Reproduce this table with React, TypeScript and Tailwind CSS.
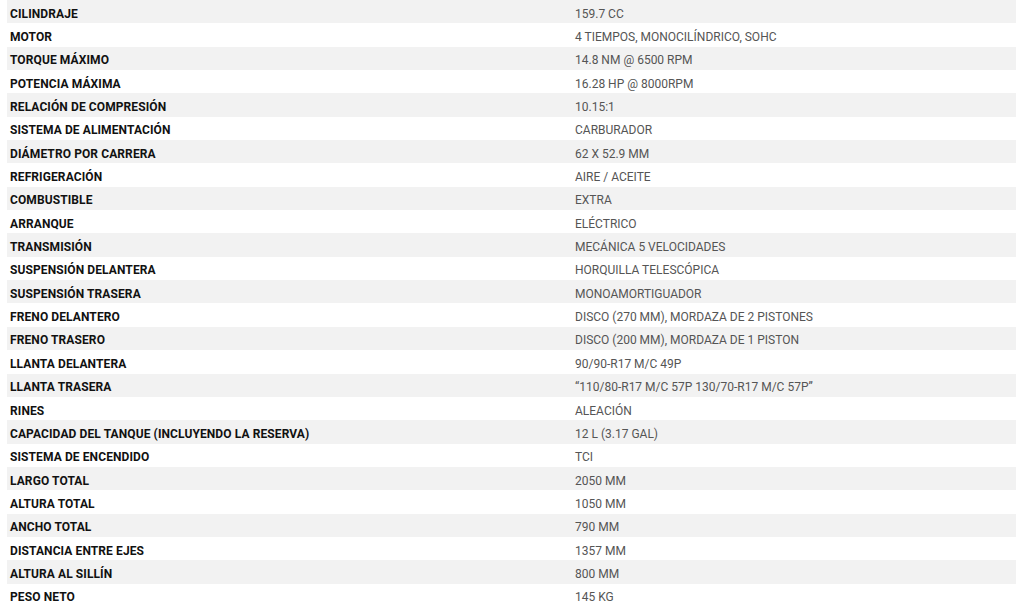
import { FC } from 'react';

const specs: [string, string][] = [
    ['CILINDRAJE', '159.7 CC'],
    ['MOTOR', '4 TIEMPOS, MONOCILÍNDRICO, SOHC'],
    ['TORQUE MÁXIMO', '14.8 NM @ 6500 RPM'],
    ['POTENCIA MÁXIMA', '16.28 HP @ 8000RPM'],
    ['RELACIÓN DE COMPRESIÓN', '10.15:1'],
    ['SISTEMA DE ALIMENTACIÓN', 'CARBURADOR'],
    ['DIÁMETRO POR CARRERA', '62 X 52.9 MM'],
    ['REFRIGERACIÓN', 'AIRE / ACEITE'],
    ['COMBUSTIBLE', 'EXTRA'],
    ['ARRANQUE', 'ELÉCTRICO'],
    ['TRANSMISIÓN', 'MECÁNICA 5 VELOCIDADES'],
    ['SUSPENSIÓN DELANTERA', 'HORQUILLA TELESCÓPICA'],
    ['SUSPENSIÓN TRASERA', 'MONOAMORTIGUADOR'],
    ['FRENO DELANTERO', 'DISCO (270 MM), MORDAZA DE 2 PISTONES'],
    ['FRENO TRASERO', 'DISCO (200 MM), MORDAZA DE 1 PISTON'],
    ['LLANTA DELANTERA', '90/90-R17 M/C 49P'],
    ['LLANTA TRASERA', '“110/80-R17 M/C 57P 130/70-R17 M/C 57P”'],
    ['RINES', 'ALEACIÓN'],
    ['CAPACIDAD DEL TANQUE (INCLUYENDO LA RESERVA)', '12 L (3.17 GAL)'],
    ['SISTEMA DE ENCENDIDO', 'TCI'],
    ['LARGO TOTAL', '2050 MM'],
    ['ALTURA TOTAL', '1050 MM'],
    ['ANCHO TOTAL', '790 MM'],
    ['DISTANCIA ENTRE EJES', '1357 MM'],
    ['ALTURA AL SILLÍN', '800 MM'],
    ['PESO NETO', '145 KG'],
];

const SpecRow: FC<{ label: string; value: string; shaded: boolean }> = ({
    label,
    value,
    shaded,
}) => {
    return (
        <div
            className={
                'flex items-center h-[23.35px] pt-[4px] ' +
                (shaded ? 'bg-[#f2f2f2]' : 'bg-white')
            }
        >
            <div className="w-[565px] pl-[3px] text-[12px] tracking-[0.1px] font-bold text-[#111111]">
                {label}
            </div>
            <div className="flex-1 pl-[3px] text-[12px] text-[#555555]">
                {value}
            </div>
        </div>
    );
};

export default function App() {
    return (
        <div className="w-[1024px] h-[607px] overflow-hidden bg-white font-['Roboto',sans-serif]">
            <div className="ml-[7px] w-[1009px]">
                {specs.map(([label, value], i) => (
                    <SpecRow
                        key={label}
                        label={label}
                        value={value}
                        shaded={i % 2 === 0}
                    />
                ))}
            </div>
        </div>
    );
}
